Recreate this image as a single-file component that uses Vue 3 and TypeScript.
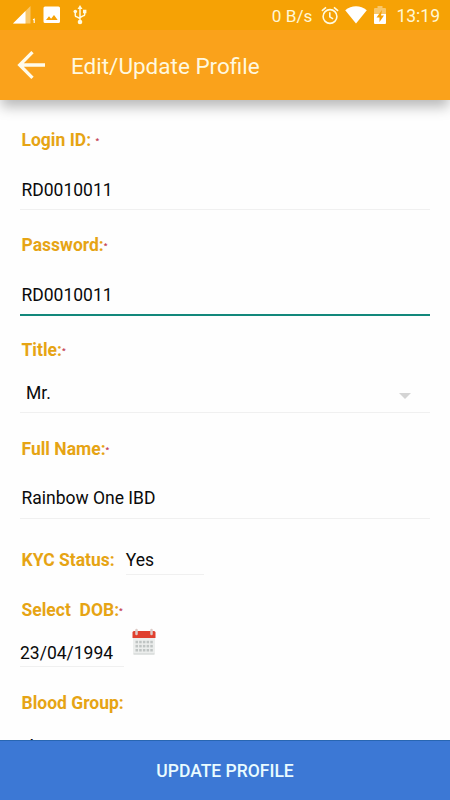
<script setup lang="ts">
import { ref } from 'vue'

const loginId = ref('RD0010011')
const password = ref('RD0010011')
const title = ref('Mr.')
const fullName = ref('Rainbow One IBD')
const kyc = ref('Yes')
const dob = ref('23/04/1994')
const bloodGroup = ref('A+')
const dotColumns = [0, 1, 2, 3, 4]
const dotRows = [0, 1, 2]
</script>

<template>
  <div class="screen">
    <header class="top">
      <div class="status">
        <svg class="signal" viewBox="0 0 24 20" width="24" height="20">
          <path d="M0 18.500 17.500 1v17.500z" fill="#fff" opacity=".4" />
          <path d="M0 18.500 12.500 6v12.500z" fill="#fff" />
          <path d="M20 14.800l1.200-.7v4" fill="none" stroke="#fff" stroke-width="1.100" />
        </svg>
        <svg class="picture" viewBox="0 0 18 18" width="18" height="18">
          <path fill="#fff" fill-rule="evenodd" d="M2 .5h13.500q1.500 0 1.500 1.500v13.500q0 1.500-1.500 1.500H2Q.5 17 .5 15.500V2Q.5.5 2 .5zM3 14h11.700l-3.700-5-2.900 3.700-2.100-2.500z" />
        </svg>
        <svg class="usb" viewBox="0 0 14 20" width="14" height="20">
          <path d="M7 3v14M2.300 7.500v3q0 1.200 1.200 1.200L7 13.500M11.700 6v3.500q0 1.200-1.200 1.200L7 12.500" fill="none" stroke="#fffbe0" stroke-width="1.500" />
          <path d="M7 0l2.500 4h-5zM10 4.800h3.400v3.400H10z" fill="#fffbe0" />
          <circle cx="2.300" cy="6.500" r="1.800" fill="#fffbe0" />
          <circle cx="7" cy="17" r="2.300" fill="#fffbe0" />
        </svg>
        <span class="speed">0 B/s</span>
        <svg class="alarm" viewBox="0 0 18 19" width="18" height="19">
          <g fill="none" stroke="#fffbe0" stroke-width="1.600">
            <circle cx="9" cy="10.500" r="6.900" />
            <path d="M.9 4.800 5 1.300M17.100 4.800 13 1.300M8.800 6.300v4.600l3.300 2" />
          </g>
        </svg>
        <svg class="wifi" viewBox="0 0 22 18" width="22" height="18">
          <path d="M11 17.500.2 4.200Q5 .3 11 .3t10.800 3.900z" fill="#fff" />
        </svg>
        <svg class="battery" viewBox="0 0 12 18" width="12" height="18">
          <path d="M0 8V3q0-1 1-1h2.500V0h5v2H11q1 0 1 1v5z" fill="#fff" opacity=".4" />
          <path d="M0 8h12v9q0 1-1 1H1q-1 0-1-1z" fill="#fff" />
          <path d="M8 4 2.500 11.500H5.500V16L10 9.500H7z" fill="#f6a205" />
        </svg>
        <time class="clock">13:19</time>
      </div>
      <div class="bar">
        <svg class="back" viewBox="0 0 28 28" width="28" height="28">
          <path d="M28 14H2M15.500 1.200 2.700 14 15.500 26.800" fill="none" stroke="#fffbea" stroke-width="3.300" />
        </svg>
        <h1>Edit/Update Profile</h1>
      </div>
    </header>

    <main class="form">
      <section class="field">
        <label>Login ID: <i>*</i></label>
        <div class="value login">{{ loginId }}</div>
      </section>
      <section class="field">
        <label>Password:<i>*</i></label>
        <div class="value focused">{{ password }}</div>
      </section>
      <section class="field select-field">
        <label>Title:<i>*</i></label>
        <div class="value select">
          <span>{{ title }}</span>
          <svg viewBox="0 0 12 6" width="12" height="6"><path d="M0 0h12L6 6z" fill="#d4d4d4" /></svg>
        </div>
      </section>
      <section class="field">
        <label>Full Name:<i>*</i></label>
        <div class="value">{{ fullName }}</div>
      </section>
      <section class="kyc">
        <label>KYC Status:</label>
        <div class="kyc-value">{{ kyc }}</div>
      </section>
      <section class="dob">
        <label>Select&nbsp; DOB:<i>*</i></label>
        <div class="dob-row">
          <div class="date">{{ dob }}</div>
          <svg class="calendar" viewBox="0 0 24 28" width="24" height="28">
            <path d="M1 8h22v17q0 1.500-1.500 1.500h-19Q1 26.500 1 25z" fill="#eceeed" />
            <path d="M1.500 26h21" stroke="#cdd1cf" stroke-width="1" />
            <path d="M.5 10V4.500q0-1.500 1.500-1.500h20q1.500 0 1.500 1.500V10z" fill="#e0402f" />
            <path d="M4.500 2v4M19.500 2v4" stroke="#dcc9c5" stroke-width="2.500" stroke-linecap="round" />
            <g fill="#bfc4c3">
              <template v-for="r in dotRows" :key="r">
                <rect v-for="c in dotColumns" :key="c" :x="3.500 + c * 3.700" :y="12.800 + r * 4.100" width="2.500" height="2.500" />
              </template>
            </g>
          </svg>
        </div>
      </section>
      <section class="blood">
        <label>Blood Group:</label>
        <div class="blood-value">{{ bloodGroup }}</div>
      </section>
    </main>

    <button class="update" type="button">UPDATE PROFILE</button>
  </div>
</template>

<style>
body {
  margin: 0;
  background: #fff;
}
</style>

<style scoped>
.screen {
  width: 450px;
  height: 800px;
  display: flex;
  flex-direction: column;
  overflow: hidden;
  background: #fefefe;
  color: #0a0a0a;
  font-family: Roboto, "Liberation Sans", sans-serif;
  font-size: 17.5px;
  line-height: 20px;
}
.top {
  position: relative;
  flex: none;
  height: 100px;
  background: #faa21b;
  box-shadow: 0 8px 12px -1px rgba(0, 0, 0, 0.27);
}
.status {
  height: 30px;
  box-sizing: border-box;
  padding: 0 10px 0 13px;
  display: flex;
  align-items: center;
  background: #f6a205;
  color: #fff8d5;
}
.status svg {
  flex: none;
}
.picture {
  margin-left: 6px;
}
.usb {
  margin-left: 12px;
}
.speed {
  margin-left: auto;
  margin-top: 2px;
  font-size: 17.2px;
}
.alarm {
  margin-left: 9px;
}
.wifi {
  margin-left: 6px;
}
.battery {
  margin-left: 7px;
}
.clock {
  margin-left: 10px;
  margin-top: 2px;
}
.bar {
  height: 70px;
  display: flex;
  align-items: center;
  padding-left: 17px;
}
h1 {
  margin: 2px 0 0 26px;
  color: #fff8df;
  font-size: 22.5px;
  font-weight: 400;
  line-height: 28px;
}
.form {
  flex: 1;
  min-height: 0;
  overflow: hidden;
  padding: 30px 20px 0;
}
label {
  display: block;
  height: 20px;
  padding-left: 1.5px;
  color: #e6a414;
  font-weight: 700;
  white-space: pre;
}
label i {
  color: #c23b4e;
  font-size: 8px;
  font-style: normal;
  line-height: 1;
  vertical-align: 3px;
}
.field {
  height: 105px;
}
.value {
  box-sizing: border-box;
  height: 60px;
  padding: 29px 1.5px 0;
  border-bottom: 1px solid #f0f0f0;
}
.value.login {
  padding-top: 30px;
}
.value.focused {
  height: 61px;
  padding-top: 30px;
  border-bottom: 2.5px solid #12887b;
}
.select-field {
  height: 99px;
}
.value.select {
  height: 53px;
  padding: 23px 19px 0 6px;
  display: flex;
  align-items: flex-start;
  justify-content: space-between;
}
.select svg {
  margin-top: 10px;
}
.kyc {
  box-sizing: border-box;
  height: 56px;
  padding-top: 6px;
  display: flex;
  align-items: flex-start;
}
.kyc-value {
  box-sizing: border-box;
  width: 78px;
  height: 25px;
  margin-left: 11px;
  border-bottom: 1px solid #f0f0f0;
}
.dob {
  height: 93px;
}
.dob-row {
  display: flex;
  align-items: flex-start;
}
.date {
  box-sizing: border-box;
  width: 104px;
  height: 47px;
  padding-top: 23px;
  border-bottom: 1px solid #f0f0f0;
}
.calendar {
  margin: 8px 0 0 8px;
}
.blood {
  height: 80px;
}
.blood-value {
  padding: 23px 0 0 6px;
}
.update {
  flex: none;
  height: 60px;
  border: 0;
  border-top: 1px solid #2866b2;
  padding: 0;
  background: #3c78d5;
  color: #e9fbff;
  font: 500 17.5px Roboto, "Liberation Sans", sans-serif;
}
</style>
